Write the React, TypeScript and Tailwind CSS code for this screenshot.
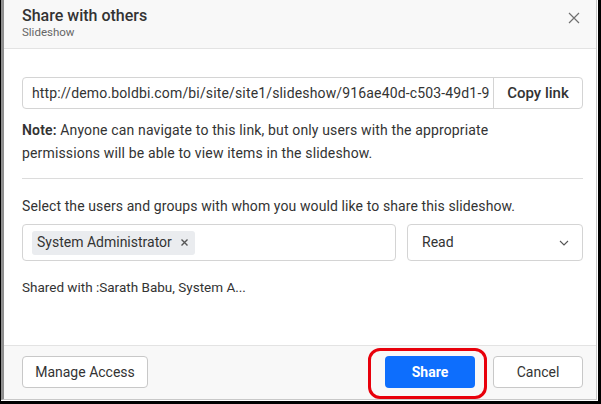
import React from "react";

export default function App() {
  return (
    <div
      className="w-[601px] h-[404px] bg-white border-l border-r-[3px] border-b-[3px] border-black box-border"
      style={{ fontFamily: "Roboto, 'Noto Sans', sans-serif" }}
    >
      <div className="w-[596px] h-[400px] border-l-[3px] border-l-[#8f8f8f] border-r border-r-[#c8c8c8] border-b border-b-[#c8c8c8] flex flex-col box-border">
        {/* Header */}
        <div className="h-[49px] bg-[#f8f8f8] border-b border-[#e3e3e3] flex items-start justify-between pl-[18px] pr-[16px] box-border">
          <div className="pt-[6px]">
            <div className="text-[16px] leading-[20px] font-medium text-[#333]">Share with others</div>
            <div className="text-[11.5px] leading-[13px] text-[#666]">Slideshow</div>
          </div>
          <svg width="12" height="12" viewBox="0 0 12 12" className="mt-[12px]" stroke="#707070" strokeWidth="1.2" fill="none">
            <path d="M1 1 L11 11 M11 1 L1 11" />
          </svg>
        </div>

        {/* Body */}
        <div className="flex-1 pl-[18px] pr-[13px] pt-[28px] text-[#333]">
          <div className="flex h-[32px] border border-[#d4d4d4] rounded-[4px] box-border">
            <div className="flex-1 overflow-hidden whitespace-nowrap pl-[9px] text-[14px] tracking-[0.15px] leading-[30px] text-[#333]">
              http://demo.boldbi.com/bi/site/site1/slideshow/916ae40d-c503-49d1-9
            </div>
            <div className="w-[89px] border-l border-[#d4d4d4] flex items-center justify-center text-[15px] font-medium text-[#333]">
              Copy link
            </div>
          </div>
          <div className="mt-[10px] text-[14px] tracking-[0.15px] leading-[23px] text-[#333]">
            <span className="font-semibold">Note:</span> Anyone can navigate to this link, but only users with the appropriate
            <br />
            permissions will be able to view items in the slideshow.
          </div>
          <div className="mt-[13px] border-t border-[#dcdcdc]" />
          <div className="mt-[18px] text-[14px] tracking-[0.1px] leading-[18px] text-[#333]">
            Select the users and groups with whom you would like to share this slideshow.
          </div>
          <div className="mt-[9px] flex gap-[11px]">
            <div className="w-[374px] h-[37px] border border-[#d4d4d4] rounded-[4px] box-border flex items-center pl-[9px]">
              <div className="h-[24px] w-[163px] bg-[#eaecef] rounded-[3px] flex items-center pl-[5px] text-[14px] text-[#333]">
                System Administrator
                <svg width="7" height="7" viewBox="0 0 7 7" className="ml-[9px]" stroke="#555" strokeWidth="1.4" fill="none">
                  <path d="M0.5 0.5 L6.5 6.5 M6.5 0.5 L0.5 6.5" />
                </svg>
              </div>
            </div>
            <div className="flex-1 h-[37px] border border-[#d4d4d4] rounded-[4px] box-border flex items-center justify-between pl-[14px] pr-[13px]">
              <span className="text-[14px] text-[#333]">Read</span>
              <svg width="10" height="6" viewBox="0 0 10 6" fill="none" stroke="#555" strokeWidth="1.1">
                <path d="M1 1 L5 5 L9 1" />
              </svg>
            </div>
          </div>
          <div className="mt-[17px] text-[13.5px] leading-[18px] text-[#333]">
            Shared with :Sarath Babu, System A...
          </div>
        </div>

        {/* Footer */}
        <div className="h-[54px] bg-[#f8f8f8] border-t border-[#e3e3e3] flex items-start justify-between pl-[18px] pr-[13px] pt-[10px] box-border">
          <button className="w-[126px] h-[32px] border border-[#c8c8c8] rounded-[4px] bg-white text-[14px] text-[#333]">
            Manage Access
          </button>
          <div className="flex items-start">
            <div className="-mt-[8px] border-[3px] border-[#e8000b] rounded-[12px] pl-[14px] pr-[9px] pt-[5px] pb-[8px] mr-[6px]">
              <button className="w-[90px] h-[32px] rounded-[4px] bg-[#0d6efd] text-white text-[14px] font-bold block">
                Share
              </button>
            </div>
            <button className="w-[90px] h-[32px] border border-[#c8c8c8] rounded-[4px] bg-white text-[14px] text-[#333]">
              Cancel
            </button>
          </div>
        </div>
      </div>
    </div>
  );
}
